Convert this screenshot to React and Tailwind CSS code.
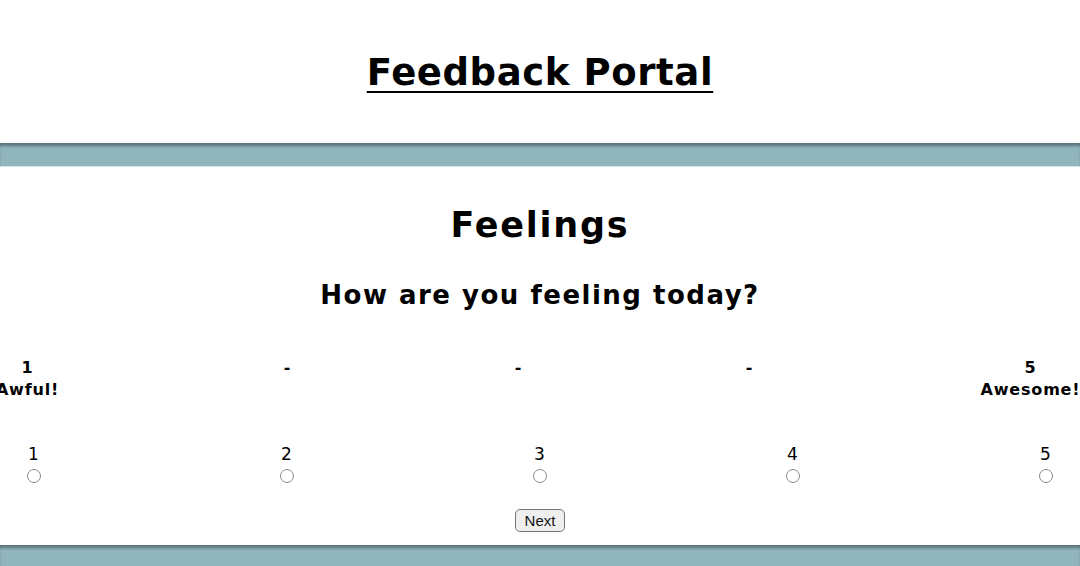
const scale = [
  { n: 1, label: "Awful!" },
  { n: 2 },
  { n: 3 },
  { n: 4 },
  { n: 5, label: "Awesome!" },
];

const Band = () => (
  <div className="h-[24px] w-full bg-[#91b5bd] shadow-[inset_0_4px_3px_-1px_rgba(70,90,95,0.7)] border-b border-[#d9e6e8]" />
);

export default function App() {
  return (
    <div className="min-h-[566px] w-full overflow-hidden bg-white text-black font-['DejaVu_Sans',Verdana,sans-serif]">
      <header className="flex h-[143px] items-center justify-center">
        <h1 className="mt-[1px] text-[37px] font-bold leading-none tracking-[0.6px] underline decoration-[2px] underline-offset-[6px]">
          Feedback Portal
        </h1>
      </header>
      <Band />
      <main className="flex h-[378px] flex-col items-center">
        <h2 className="mt-[41px] text-[35px] font-bold leading-none tracking-[1.75px]">Feelings</h2>
        <h3 className="mt-[39px] text-[26px] font-bold leading-none tracking-[1.5px]">How are you feeling today?</h3>

        <div className="mt-[49px] w-[1080px]">
          <div className="ml-[-117px] grid grid-cols-[289px_231px_231px_231px_331px] text-center text-[16px] font-bold leading-[22px] tracking-[0.8px]">
            {scale.map((s) => (
              <div key={s.n}>
                {s.label ? (
                  <>
                    <div>{s.n}</div>
                    <div>{s.label}</div>
                  </>
                ) : (
                  <div>-</div>
                )}
              </div>
            ))}
          </div>
        </div>

        <div className="mt-[44px] w-[1080px]">
          <div className="ml-[-93px] grid w-[1265px] grid-cols-5 text-center text-[17px] leading-[18px]">
            {scale.map((s) => (
              <label key={s.n} className="flex flex-col items-center">
                <span>{s.n}</span>
                <span className="mt-[6px] block h-[14px] w-[14px] rounded-full border border-[#8a8a8a] bg-white" />
              </label>
            ))}
          </div>
        </div>

        <button className="mt-[26px] h-[23px] rounded-[5px] border border-[#767676] bg-[#efefef] px-[9px] text-[15px] leading-none text-[#111] font-['Liberation_Sans',Arial,sans-serif]">
          Next
        </button>
      </main>
      <Band />
    </div>
  );
}
